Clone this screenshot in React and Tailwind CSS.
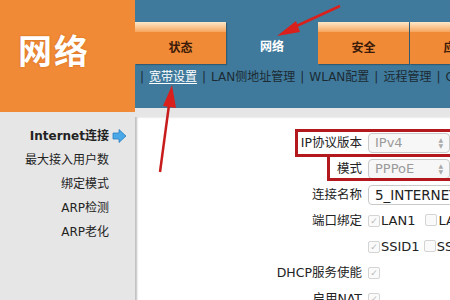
import React from "react";

const FONT = { fontFamily: '"DejaVu Sans", "Noto Sans CJK SC", sans-serif' };

function Tab({ label, active }) {
  if (active) {
    return (
      <div className="w-[92px] shrink-0 h-full flex items-center justify-center text-white text-[12px] font-bold pt-[8px]">
        {label}
      </div>
    );
  }
  return (
    <div className="w-[91px] shrink-0 h-full flex flex-col bg-[#f08a36] shadow-[1px_1px_1px_rgba(0,0,0,0.25)]">
      <div className="h-[10px] bg-gradient-to-b from-[#fde8c8] to-[#f5a55c]" />
      <div className="flex-1 flex items-center justify-center text-[#3a1a08] text-[12px] font-bold">
        {label}
      </div>
    </div>
  );
}

function Select({ value }) {
  return (
    <div className="w-[82px] h-[20px] shrink-0 rounded-[4px] border border-[#c9c9c9] bg-[#f7f7f7] flex items-center justify-between pl-[6px] pr-[6px] text-[#9a9a9a] text-[13px]">
      <span>{value}</span>
      <span className="flex flex-col text-[6px] leading-[6px] text-[#aaa]">
        <span>▲</span>
        <span>▼</span>
      </span>
    </div>
  );
}

function Check({ checked = true }) {
  return (
    <span className="inline-flex shrink-0 w-[12px] h-[12px] border border-[#d4d4d4] rounded-[2px] bg-[#fafafa] items-center justify-center text-[9px] text-[#b8b8b8] leading-none">
      {checked ? "✓" : ""}
    </span>
  );
}

function Row({ label, children }) {
  return (
    <div className="flex items-center h-[26px] shrink-0">
      <div className="w-[233px] shrink-0 text-right pr-[6px] text-[12.5px] text-[#222]">{label}</div>
      <div className="flex items-center">{children}</div>
    </div>
  );
}

export default function App() {
  return (
    <div className="relative w-[450px] h-[300px] overflow-hidden bg-white flex" style={FONT}>
      {/* left column */}
      <div className="w-[135px] flex flex-col shrink-0">
        <div className="h-[112px] shrink-0 bg-[#f08a36] flex items-center pl-[18px] pb-[8px]">
          <span className="text-white text-[34px] font-bold tracking-[2px] [text-shadow:0_0_2px_rgba(180,80,0,0.6)]">网络</span>
        </div>
        <div className="flex-1 bg-[#e6e6e6] flex flex-col items-end pr-[8px] pt-[12px] text-[12px] text-[#222]">
          <div className="h-[24px] flex items-center gap-[3px]">
            <span className="font-bold">Internet连接</span>
            <svg width="15" height="14" viewBox="0 0 15 14">
              <path d="M1 4 H7 V0.5 L14 7 L7 13.5 V10 H1 Z" fill="#4aa8e8" stroke="#2a7fc0" strokeWidth="0.8" />
            </svg>
          </div>
          <div className="h-[24px] flex items-center pr-[18px]">最大接入用户数</div>
          <div className="h-[24px] flex items-center pr-[18px]">绑定模式</div>
          <div className="h-[24px] flex items-center pr-[18px]">ARP检测</div>
          <div className="h-[24px] flex items-center pr-[18px]">ARP老化</div>
        </div>
      </div>

      {/* right column */}
      <div className="flex-1 flex flex-col min-w-0 overflow-hidden">
        <div className="h-[108px] shrink-0 bg-[#3f7a9c] flex flex-col">
          <div className="h-[22px] shrink-0" />
          <div className="h-[42px] shrink-0 flex">
            <Tab label="状态" />
            <Tab label="网络" active />
            <Tab label="安全" />
            <div className="w-[1px] shrink-0" />
            <Tab label="应用" />
          </div>
          <div className="h-[26px] shrink-0 flex items-center pl-[5px] text-[12px] text-[#1c2a33] whitespace-nowrap gap-[5px]">
            <span>|</span>
            <span className="text-white underline underline-offset-2">宽带设置</span>
            <span>|</span>
            <span>LAN侧地址管理</span>
            <span>|</span>
            <span>WLAN配置</span>
            <span>|</span>
            <span>远程管理</span>
            <span>|</span>
            <span>QoS</span>
          </div>
        </div>
        <div className="h-[9px] shrink-0 bg-[#e6e6e6]" />
        <div className="flex-1 flex flex-col bg-white shadow-[inset_2px_0_2px_rgba(0,0,0,0.25)] pt-[13px] whitespace-nowrap">
          <Row label="IP协议版本"><Select value="IPv4" /></Row>
          <Row label="模式"><Select value="PPPoE" /></Row>
          <Row label="连接名称">
            <div className="w-[90px] h-[20px] shrink-0 rounded-[4px] border border-[#c9c9c9] bg-white flex items-center pl-[6px] text-[13.5px] text-[#222]">
              5_INTERNET_R
            </div>
          </Row>
          <Row label="端口绑定">
            <Check /><span className="ml-[1px] text-[13px] text-[#222]">LAN1</span>
            <span className="ml-[10px]"><Check checked={false} /></span><span className="ml-[1px] text-[13px] text-[#222]">LAN2</span>
          </Row>
          <Row label="">
            <Check /><span className="ml-[1px] text-[13px] text-[#222]">SSID1</span>
            <span className="ml-[4px]"><Check checked={false} /></span><span className="ml-[1px] text-[13px] text-[#222]">SSID2</span>
          </Row>
          <Row label="DHCP服务使能"><Check /></Row>
          <Row label="启用NAT"><Check /></Row>
        </div>
      </div>

      {/* red highlight boxes */}
      <div className="absolute left-[295px] top-[129px] w-[170px] h-[28px] border-[3px] border-[#b3191c]" />
      <div className="absolute left-[327px] top-[154px] w-[140px] h-[27px] border-[3px] border-[#b3191c]" />

      {/* red arrows */}
      <svg className="absolute left-0 top-0 pointer-events-none" width="450" height="300" viewBox="0 0 450 300">
        <line x1="340" y1="6" x2="290" y2="29" stroke="#d9201c" strokeWidth="2.5" />
        <polygon points="277,36 296,21 300,32" fill="#d9201c" />
        <line x1="160" y1="172" x2="169" y2="105" stroke="#c81c1c" strokeWidth="2.5" />
        <polygon points="172,85 163,106 176,108" fill="#d9201c" />
      </svg>
    </div>
  );
}
